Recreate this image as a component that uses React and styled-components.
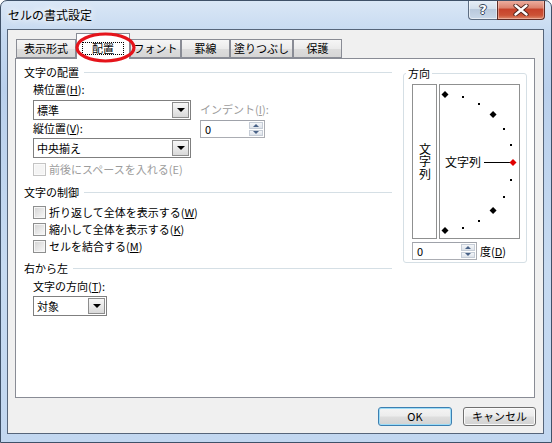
import React from 'react';
import styled, { createGlobalStyle } from 'styled-components';

const FONT = `"Noto Sans CJK JP", "Noto Sans CJK SC", "Noto Sans", sans-serif`;

const GlobalStyle = createGlobalStyle`
  html, body { margin: 0; padding: 0; background: #fff; }
  body { font-family: ${FONT}; font-size: 11px; color: #000; }
  * { box-sizing: border-box; }
  u { text-underline-offset: 1px; }
`;

const Window = styled.div`
  position: relative;
  width: 552px;
  height: 443px;
  display: flex;
  flex-direction: column;
  border: 1px solid #3f5168;
  border-radius: 7px 7px 0 0;
  padding: 0 7px 8px 6px;
  background: linear-gradient(180deg, #dae7f6 0%, #c4d8f0 8%, #bad0ec 20%, #c6daf1 60%, #c2d7f0 100%);
  overflow: hidden;
  font-family: ${FONT};
`;

const TitleBar = styled.div`
  flex: none;
  height: 28px;
  display: flex;
  align-items: flex-start;
  padding-left: 1px;
  margin-right: -1px;
`;

const TitleText = styled.div`
  flex: 1;
  margin-top: 6px;
  font-size: 12px;
  line-height: 16px;
  color: #000;
  text-shadow: 0 0 6px #fff, 0 0 10px rgba(255, 255, 255, 0.9);
`;

const CaptionButtons = styled.div`
  display: flex;
  margin-top: -1px;
`;

const HelpButton = styled.div`
  width: 29px;
  height: 20px;
  border: 1px solid #5d6d82;
  border-top: none;
  border-right: none;
  border-radius: 0 0 0 4px;
  background: linear-gradient(180deg, #e9f0f8 0%, #d3dfec 45%, #b9c9dc 50%, #c9d8e9 100%);
  box-shadow: inset 0 0 0 1px rgba(255, 255, 255, 0.55);
  display: flex;
  align-items: center;
  justify-content: center;
  font-family: "DejaVu Sans", sans-serif;
  font-weight: bold;
  font-size: 13px;
  color: #fff;
  text-shadow: -1px 0 #37475c, 1px 0 #37475c, 0 -1px #37475c, 0 1px #37475c;
`;

const CloseButton = styled.div`
  width: 48px;
  height: 20px;
  border: 1px solid #5e2d27;
  border-top: none;
  border-radius: 0 0 4px 0;
  background: linear-gradient(180deg, #eeb3a5 0%, #dc8470 40%, #c7432b 50%, #cc5236 80%, #dd8a6c 100%);
  box-shadow: inset 0 0 0 1px rgba(255, 220, 210, 0.45);
  display: flex;
  align-items: center;
  justify-content: center;
`;

const Client = styled.div`
  flex: 1;
  display: flex;
  flex-direction: column;
  background: #f0f0f0;
  border: 1px solid #56657a;
  padding: 3px 8px 0 7px;
`;

const TabStrip = styled.div`
  position: relative;
  z-index: 1;
  height: 25px;
  display: flex;
  align-items: flex-end;
  padding-left: 1px;
`;

const Tab = styled.div`
  width: ${(p) => p.$w}px;
  height: ${(p) => (p.$active ? 26 : 19)}px;
  margin-bottom: ${(p) => (p.$active ? -1 : 0)}px;
  border: 1px solid #898c95;
  border-bottom: ${(p) => (p.$active ? 'none' : '1px solid #898c95')};
  background: ${(p) =>
    p.$active ? '#ffffff' : 'linear-gradient(180deg, #f6f6f6 0%, #ebebeb 50%, #dddddd 51%, #d6d6d6 100%)'};
  display: flex;
  align-items: center;
  justify-content: center;
  padding-top: ${(p) => (p.$active ? 3 : 0)}px;
  padding-bottom: ${(p) => (p.$active ? 0 : 1)}px;
  font-size: 11px;
  line-height: 14px;
  color: #000;
`;

const FocusLabel = styled.span`
  border: 1px dotted #000;
  padding: 0 9px;
  line-height: 11px;
`;

const Panel = styled.div`
  flex: none;
  height: 340px;
  display: flex;
  align-items: flex-start;
  background: #fff;
  border: 1px solid #898c95;
  padding: 6px 0 0 8px;
`;

const LeftCol = styled.div`
  width: 368px;
  display: flex;
  flex-direction: column;
`;

const SectionHeader = styled.div`
  display: flex;
  align-items: center;
  gap: 5px;
  height: 14px;
  line-height: 14px;
  margin-top: ${(p) => p.$mt || 0}px;
  white-space: nowrap;
  &::after {
    content: '';
    flex: 1;
    height: 1px;
    background: #d5dfe5;
  }
`;

const AlignBlock = styled.div`
  display: flex;
  gap: 9px;
  padding-left: 9px;
  margin-top: 3px;
`;

const AlignMain = styled.div`
  width: 158px;
  display: flex;
  flex-direction: column;
`;

const IndentCol = styled.div`
  display: flex;
  flex-direction: column;
  padding-top: 20px;
`;

const FieldLabel = styled.div`
  height: 14px;
  line-height: 14px;
  margin-top: ${(p) => p.$mt || 0}px;
  color: ${(p) => (p.$disabled ? '#9c9c9c' : '#000')};
  white-space: nowrap;
`;

const Indent = styled.div`
  display: flex;
  flex-direction: column;
  padding-left: 9px;
  margin-top: ${(p) => p.$mt || 0}px;
`;

const SelectBox = styled.div`
  width: ${(p) => p.$w}px;
  height: 20px;
  margin-top: ${(p) => p.$mt || 0}px;
  display: flex;
  align-items: center;
  border: 1px solid #7f7f7f;
  padding: 1px;
  background: #fff;
`;

const SelectValue = styled.div`
  flex: 1;
  padding-left: 2px;
  line-height: 16px;
`;

const DropButton = styled.div`
  width: 17px;
  height: 16px;
  border: 1px solid #8d8d8d;
  background: linear-gradient(180deg, #f7f7f7 0%, #e9e9e9 50%, #d9d9d9 100%);
  display: flex;
  align-items: center;
  justify-content: center;
  &::after {
    content: '';
    border-left: 4px solid transparent;
    border-right: 4px solid transparent;
    border-top: 4px solid #000;
  }
`;

const SpinBox = styled.div`
  width: 65px;
  height: 18px;
  margin-top: ${(p) => p.$mt || 0}px;
  display: flex;
  border: 1px solid #abadb3;
  border-top-color: #9fa2aa;
  background: #fff;
`;

const SpinValue = styled.div`
  flex: 1;
  padding-left: 4px;
  line-height: 16px;
`;

const SpinButtons = styled.div`
  width: 16px;
  display: flex;
  flex-direction: column;
  padding: 1px;
  gap: 1px;
`;

const SpinArrow = styled.div`
  flex: 1;
  display: flex;
  align-items: center;
  justify-content: center;
  background: linear-gradient(180deg, #f4f6f9 0%, #dee3ea 100%);
  border: 1px solid #c6cdd7;
  &::after {
    content: '';
    border-left: 3px solid transparent;
    border-right: 3px solid transparent;
    ${(p) => (p.$down ? 'border-top: 3px solid #4a6388;' : 'border-bottom: 3px solid #4a6388;')}
  }
`;

const CheckRow = styled.div`
  display: flex;
  align-items: center;
  gap: 3px;
  height: 13px;
  line-height: 13px;
  padding-left: 9px;
  margin-top: ${(p) => p.$mt || 0}px;
  color: ${(p) => (p.$disabled ? '#9c9c9c' : '#000')};
  white-space: nowrap;
`;

const CheckBox = styled.span`
  flex: none;
  width: 13px;
  height: 13px;
  border: 1px solid ${(p) => (p.$disabled ? '#c4c4c4' : '#8e8f8f')};
  background: ${(p) =>
    p.$disabled ? '#f4f4f4' : 'linear-gradient(135deg, #d2d2d2 0%, #eeeeee 70%, #f8f8f8 100%)'};
  box-shadow: inset 0 0 0 1px ${(p) => (p.$disabled ? '#fafafa' : '#f6f6f6')};
`;

const Group = styled.fieldset`
  margin: 1px 0 0 11px;
  width: 124px;
  min-inline-size: 0;
  border: 1px solid #d5dfe5;
  border-radius: 3px;
  padding: 4px 6px 2px 8px;
`;

const GroupLegend = styled.legend`
  margin-left: -6px;
  padding: 0 2px;
  height: 14px;
  line-height: 14px;
  font-size: 11px;
`;

const OrientRow = styled.div`
  display: flex;
  gap: 2px;
`;

const VerticalBox = styled.div`
  width: 25px;
  height: 155px;
  border: 1px solid #8f9090;
  display: flex;
  align-items: center;
  justify-content: center;
`;

const VerticalText = styled.span`
  writing-mode: vertical-rl;
  text-orientation: upright;
  font-size: 12px;
  line-height: 12px;
  letter-spacing: 0.5px;
`;

const DiagramBox = styled.div`
  width: 81px;
  height: 155px;
  border: 1px solid #8f9090;
  display: flex;
`;

const DegreeRow = styled.div`
  display: flex;
  align-items: center;
  gap: 3px;
  margin-top: 3px;
  white-space: nowrap;
`;

const ButtonRow = styled.div`
  display: flex;
  justify-content: flex-end;
  gap: 11px;
  margin-top: 9px;
  margin-right: -1px;
`;

const DialogButton = styled.button`
  width: ${(p) => p.$w}px;
  height: 19px;
  padding: 0;
  font-family: ${FONT};
  font-size: 11px;
  line-height: 15px;
  color: #000;
  border: 1px solid ${(p) => (p.$default ? '#3c7fb1' : '#707070')};
  border-radius: 3px;
  background: linear-gradient(180deg, #f4f4f4 0%, #ececec 48%, #dedede 52%, #d2d2d2 100%);
  box-shadow: inset 0 0 0 1px ${(p) => (p.$default ? '#9ddcf7' : '#fbfbfb')};
`;

const Annotation = styled.svg`
  position: absolute;
  left: 72px;
  top: 29px;
  pointer-events: none;
  z-index: 5;
`;

function Select({ w, mt, value }) {
  return (
    <SelectBox $w={w} $mt={mt}>
      <SelectValue>{value}</SelectValue>
      <DropButton />
    </SelectBox>
  );
}

function Spin({ mt, value }) {
  return (
    <SpinBox $mt={mt}>
      <SpinValue>{value}</SpinValue>
      <SpinButtons>
        <SpinArrow />
        <SpinArrow $down />
      </SpinButtons>
    </SpinBox>
  );
}

function Check({ disabled, mt, children }) {
  return (
    <CheckRow $disabled={disabled} $mt={mt}>
      <CheckBox $disabled={disabled} />
      <span>{children}</span>
    </CheckRow>
  );
}

function OrientationDiagram() {
  const cx = 5;
  const cy = 77.5;
  const r = 68;
  const marks = [];
  for (let i = 0; i <= 12; i++) {
    const a = ((90 - i * 15) * Math.PI) / 180;
    const x = cx + r * Math.cos(a);
    const y = cy - r * Math.sin(a);
    if (i % 3 === 0) {
      const s = 3.5;
      marks.push(
        <polygon
          key={i}
          points={`${x},${y - s} ${x + s},${y} ${x},${y + s} ${x - s},${y}`}
          fill={i === 6 ? '#e00000' : '#000'}
        />
      );
    } else {
      marks.push(<rect key={i} x={Math.round(x) - 1} y={Math.round(y) - 1} width="2" height="2" fill="#000" />);
    }
  }
  return (
    <svg width="79" height="153" viewBox="0 0 79 153">
      <text x="5" y="82" fontSize="12" fontFamily={FONT} fill="#000">
        文字列
      </text>
      <line x1="44" y1={cy} x2="70" y2={cy} stroke="#000" strokeWidth="1" />
      {marks}
    </svg>
  );
}

export default function App() {
  return (
    <>
      <GlobalStyle />
      <Window>
        <TitleBar>
          <TitleText>セルの書式設定</TitleText>
          <CaptionButtons>
            <HelpButton>?</HelpButton>
            <CloseButton>
              <svg width="16" height="12" viewBox="0 0 16 12">
                <path
                  d="M2.5 1.5 L13.5 10.5 M13.5 1.5 L2.5 10.5"
                  stroke="#4a2019"
                  strokeWidth="4.2"
                  strokeLinecap="round"
                />
                <path
                  d="M2.5 1.5 L13.5 10.5 M13.5 1.5 L2.5 10.5"
                  stroke="#ffffff"
                  strokeWidth="2.4"
                  strokeLinecap="round"
                />
              </svg>
            </CloseButton>
          </CaptionButtons>
        </TitleBar>

        <Client>
          <TabStrip>
            <Tab $w={60}>表示形式</Tab>
            <Tab $w={54} $active>
              <FocusLabel>配置</FocusLabel>
            </Tab>
            <Tab $w={51}>フォント</Tab>
            <Tab $w={49}>罫線</Tab>
            <Tab $w={63}>塗りつぶし</Tab>
            <Tab $w={49}>保護</Tab>
          </TabStrip>

          <Panel>
            <LeftCol>
              <SectionHeader>文字の配置</SectionHeader>
              <AlignBlock>
                <AlignMain>
                  <FieldLabel>
                    横位置(<u>H</u>):
                  </FieldLabel>
                  <Select w={158} mt={4} value="標準" />
                  <FieldLabel $mt={1}>
                    縦位置(<u>V</u>):
                  </FieldLabel>
                  <Select w={158} mt={3} value="中央揃え" />
                </AlignMain>
                <IndentCol>
                  <FieldLabel $disabled>
                    インデント(<u>I</u>):
                  </FieldLabel>
                  <Spin mt={4} value="0" />
                </IndentCol>
              </AlignBlock>
              <Check disabled mt={5}>
                前後にスペースを入れる(E)
              </Check>

              <SectionHeader $mt={9}>文字の制御</SectionHeader>
              <Check mt={7}>
                折り返して全体を表示する(<u>W</u>)
              </Check>
              <Check mt={4}>
                縮小して全体を表示する(<u>K</u>)
              </Check>
              <Check mt={4}>
                セルを結合する(<u>M</u>)
              </Check>

              <SectionHeader $mt={8}>右から左</SectionHeader>
              <Indent $mt={4}>
                <FieldLabel>
                  文字の方向(<u>T</u>):
                </FieldLabel>
                <Select w={74} mt={3} value="対象" />
              </Indent>
            </LeftCol>

            <Group>
              <GroupLegend>方向</GroupLegend>
              <OrientRow>
                <VerticalBox>
                  <VerticalText>文字列</VerticalText>
                </VerticalBox>
                <DiagramBox>
                  <OrientationDiagram />
                </DiagramBox>
              </OrientRow>
              <DegreeRow>
                <Spin value="0" />
                <span>
                  度(<u>D</u>)
                </span>
              </DegreeRow>
            </Group>
          </Panel>

          <ButtonRow>
            <DialogButton $w={74} $default>
              OK
            </DialogButton>
            <DialogButton $w={73}>キャンセル</DialogButton>
          </ButtonRow>
        </Client>

        <Annotation width="66" height="36" viewBox="0 0 66 36">
          <ellipse cx="32.5" cy="17.5" rx="28.5" ry="13.5" fill="none" stroke="#e5141b" strokeWidth="3.2" />
        </Annotation>
      </Window>
    </>
  );
}
